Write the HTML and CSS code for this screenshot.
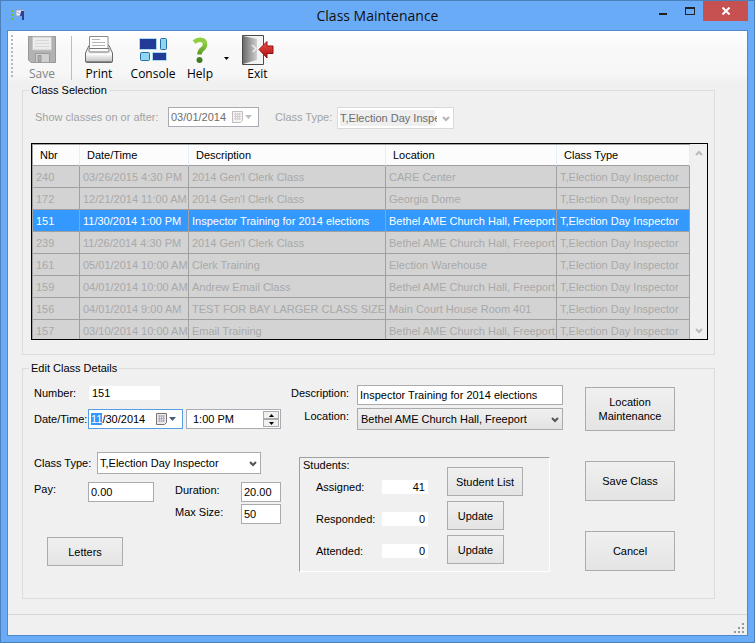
FILE: index.html
```html
<!DOCTYPE html>
<html lang="en">
<head>
    <meta charset="UTF-8">
    <title>Class Maintenance</title>
    <link rel="stylesheet" href="styles.css">
</head>
<body>
    <div class="window">
        <header class="titlebar">
            <svg class="app-icon" width="16" height="12" viewBox="0 0 16 12">
                <path d="M1 1h2v2H1zM1 5h2v2H1zM1 9h2v2H1z" fill="#7cb82f"/>
                <path d="M6 1h8v6H6z" fill="#eef3fb" stroke="#8c9cc4"/>
                <path d="M7 3l3 2" stroke="#9aa6c0"/>
                <path d="M11 2h3v9h-2V7h-2z" fill="#2b3f9c"/>
            </svg>
            <h1>Class Maintenance</h1>
            <div class="window-buttons">
                <button type="button" class="minimize" aria-label="Minimize"><svg width="10" height="10" viewBox="0 0 10 10"><path d="M1 7h8v2H1z" fill="#222"/></svg></button>
                <button type="button" class="maximize" aria-label="Maximize"><svg width="10" height="8" viewBox="0 0 10 8"><path d="M0 0h10v8H0zM1 2v5h8V2z" fill="#222" fill-rule="evenodd"/></svg></button>
                <button type="button" class="close" aria-label="Close"><svg width="8" height="8" viewBox="0 0 8 8"><path d="M0.500 0.500l7 7M7.500 0.500l-7 7" stroke="#fff" stroke-width="2"/></svg></button>
            </div>
        </header>

        <main class="client">
            <nav class="toolbar">
                <span class="grip"></span>
                <button type="button" class="tool save" disabled>
                    <svg width="32" height="32" viewBox="0 0 32 32">
                        <path d="M2.500 2.500h27v26H5l-2.500-2.500z" fill="#b2b2b2" stroke="#989898"/>
                        <path d="M6.500 3h19v13h-19z" fill="#ececec" stroke="#c8c8c8"/>
                        <path d="M9 6.500h14M9 9.500h14M9 12.500h14" stroke="#d8d8d8"/>
                        <path d="M9.500 19.500h14v9h-14z" fill="#d0d0d0" stroke="#9c9c9c"/>
                        <path d="M12 21.500h3v6h-3z" fill="#acacac" stroke="#999"/>
                    </svg>
                    <span>Save</span>
                </button>
                <span class="separator"></span>
                <button type="button" class="tool print">
                    <svg width="32" height="32" viewBox="0 0 32 32">
                        <defs>
                            <linearGradient id="printer" x1="0" y1="0" x2="0" y2="1">
                                <stop offset="0" stop-color="#fff"/>
                                <stop offset="0.6" stop-color="#eee"/>
                                <stop offset="1" stop-color="#bbb"/>
                            </linearGradient>
                        </defs>
                        <path d="M6 11.500h20l3.500 7.500v8q0 1.500-1.500 1.500H4q-1.500 0-1.500-1.500v-8z" fill="url(#printer)" stroke="#6a6a6a"/>
                        <path d="M6.500 2.500h18.500v12H6.500z" fill="#fff" stroke="#8a8a8a"/>
                        <path d="M9 5.500h8M9 8.500h13M9 11.500h13" stroke="#b5b5b5"/>
                        <path d="M6 14.500h20v2.500q0 1-1 1H7q-1 0-1-1z" fill="#fafafa" stroke="#777"/>
                        <path d="M3 20.500h26" stroke="#fff"/>
                        <path d="M3 27.500h26" stroke="#8a8a8a"/>
                    </svg>
                    <span>Print</span>
                </button>
                <button type="button" class="tool console">
                    <svg width="32" height="32" viewBox="0 0 32 32">
                        <rect x="2.500" y="4.500" width="17" height="11" rx="1" fill="#233a97" stroke="#a5dcf2"/>
                        <rect x="23.500" y="4.500" width="6" height="11" rx="1" fill="#8fd8f4" stroke="#2b6ea5"/>
                        <rect x="3.500" y="18.500" width="9" height="8" rx="1" fill="#8fd8f4" stroke="#2b6ea5"/>
                        <rect x="15.500" y="18.500" width="14" height="8" rx="1" fill="#233a97" stroke="#a5dcf2"/>
                    </svg>
                    <span>Console</span>
                </button>
                <button type="button" class="tool help">
                    <svg width="32" height="32" viewBox="0 0 32 32">
                        <defs>
                            <linearGradient id="leaf" gradientUnits="userSpaceOnUse" x1="0" y1="4" x2="0" y2="29">
                                <stop offset="0.2" stop-color="#8fce3c"/>
                                <stop offset="0.9" stop-color="#3f7a1c"/>
                            </linearGradient>
                        </defs>
                        <path d="M10 8q3-2.200 6-2.200 5 0 5 4.400 0 3-3 5.200-2.500 1.800-2.500 5.100" fill="none" stroke="url(#leaf)" stroke-width="4.500"/>
                        <circle cx="15.500" cy="26" r="3" fill="url(#leaf)"/>
                    </svg>
                    <span>Help</span>
                </button>
                <button type="button" class="tool-arrow" aria-label="More help"><svg width="5" height="3" viewBox="0 0 5 3"><path d="M0 0h5L2.500 3z" fill="#000"/></svg></button>
                <button type="button" class="tool exit">
                    <svg width="32" height="32" viewBox="0 0 32 32">
                        <defs>
                            <linearGradient id="door" x1="0" y1="0" x2="1" y2="0">
                                <stop offset="0" stop-color="#6b6b6b"/>
                                <stop offset="1" stop-color="#cfcfcf"/>
                            </linearGradient>
                            <linearGradient id="arrow" x1="0" y1="0" x2="0" y2="1">
                                <stop offset="0" stop-color="#f0504c"/>
                                <stop offset="1" stop-color="#a80d0d"/>
                            </linearGradient>
                        </defs>
                        <path d="M0.500 1.500h21v29h-21z" fill="#f2f2f2" stroke="#4a4a4a"/>
                        <path d="M1 2l14 3v21L1 30z" fill="url(#door)"/>
                        <path d="M10 11l4 3.500-3 3.500" fill="none" stroke="#eee" stroke-width="1.500"/>
                        <path d="M17 15.500l8-8v4.500h6v7.500h-6V24z" fill="url(#arrow)" stroke="#9a1010"/>
                    </svg>
                    <span>Exit</span>
                </button>
            </nav>

            <fieldset class="group">
                <legend>Class Selection</legend>
                <div class="filters">
                    <label class="filter-date-label" for="since">Show classes on or after:</label>
                    <div class="picker filter-date">
                        <input type="text" id="since" value="03/01/2014" disabled>
                        <svg class="calendar" width="23" height="14" viewBox="0 0 23 14">
                            <path d="M1.500 1.500h10v9l-2 2h-8z" fill="#f4f2f2" stroke="#c3bcbc"/>
                            <path d="M3 4h7M3 6.500h7M3 9h7M4.500 3v7M6.500 3v7M8.500 3v7" stroke="#d2cfd2"/>
                            <path d="M14 5h7l-3.500 4z" fill="#bdbdbd"/>
                        </svg>
                    </div>
                    <label class="filter-type-label" for="typeFilter">Class Type:</label>
                    <div class="combo filter-type">
                        <select id="typeFilter" disabled>
                            <option>T,Election Day Inspector</option>
                        </select>
                        <svg class="chevron" width="8" height="6" viewBox="0 0 8 6"><path d="M1 1l3 3 3-3" fill="none" stroke="#b5b5b5" stroke-width="2"/></svg>
                    </div>
                </div>

                <div class="grid">
                    <div class="grid-view">
                        <table>
                            <colgroup>
                                <col class="col-nbr">
                                <col class="col-date">
                                <col class="col-desc">
                                <col class="col-loc">
                                <col>
                            </colgroup>
                            <thead>
                                <tr><th>Nbr</th><th>Date/Time</th><th>Description</th><th>Location</th><th>Class Type</th></tr>
                            </thead>
                            <tbody>
                                <tr><td>240</td><td>03/26/2015 4:30 PM</td><td>2014 Gen'l Clerk Class</td><td>CARE Center</td><td>T,Election Day Inspector</td></tr>
                                <tr><td>172</td><td>12/21/2014 11:00 AM</td><td>2014 Gen'l Clerk Class</td><td>Georgia Dome</td><td>T,Election Day Inspector</td></tr>
                                <tr class="selected"><td>151</td><td>11/30/2014 1:00 PM</td><td>Inspector Training for 2014 elections</td><td>Bethel AME Church Hall, Freeport</td><td>T,Election Day Inspector</td></tr>
                                <tr><td>239</td><td>11/26/2014 4:30 PM</td><td>2014 Gen'l Clerk Class</td><td>Bethel AME Church Hall, Freeport</td><td>T,Election Day Inspector</td></tr>
                                <tr><td>161</td><td>05/01/2014 10:00 AM</td><td>Clerk Training</td><td>Election Warehouse</td><td>T,Election Day Inspector</td></tr>
                                <tr><td>159</td><td>04/01/2014 10:00 AM</td><td>Andrew Email Class</td><td>Bethel AME Church Hall, Freeport</td><td>T,Election Day Inspector</td></tr>
                                <tr><td>156</td><td>04/01/2014 9:00 AM</td><td>TEST FOR BAY LARGER CLASS SIZE</td><td>Main Court House Room 401</td><td>T,Election Day Inspector</td></tr>
                                <tr><td>157</td><td>03/10/2014 10:00 AM</td><td>Email Training</td><td>Bethel AME Church Hall, Freeport</td><td>T,Election Day Inspector</td></tr>
                            </tbody>
                        </table>
                    </div>
                    <div class="scrollbar">
                        <button type="button" aria-label="Scroll up" disabled><svg width="8" height="6" viewBox="0 0 8 6"><path d="M1 5l3-3 3 3" fill="none" stroke="#bbb" stroke-width="2"/></svg></button>
                        <button type="button" aria-label="Scroll down" disabled><svg width="8" height="6" viewBox="0 0 8 6"><path d="M1 1l3 3 3-3" fill="none" stroke="#bbb" stroke-width="2"/></svg></button>
                    </div>
                </div>
            </fieldset>

            <fieldset class="group">
                <legend>Edit Class Details</legend>
                <form class="details">
                    <div class="when">
                        <div class="row number-row">
                            <label for="number">Number:</label>
                            <input class="plain" type="text" id="number" value="151" readonly>
                        </div>
                        <div class="row date-row">
                            <label for="date">Date/Time:</label>
                            <div class="picker active">
                                <input type="text" id="date" value="11/30/2014">
                                <svg class="calendar" width="23" height="14" viewBox="0 0 23 14">
                                    <path d="M1.500 1.500h10v9l-2 2h-8z" fill="#eceaea" stroke="#7d7070"/>
                                    <path d="M3 4h7M3 6.500h7M3 9h7M4.500 3v7M6.500 3v7M8.500 3v7" stroke="#a9b0bd"/>
                                    <path d="M14 5h7l-3.500 4z" fill="#44607f"/>
                                </svg>
                            </div>
                            <div class="picker time">
                                <input type="text" id="time" value="1:00 PM" aria-label="Time">
                                <div class="spinner">
                                    <button type="button" aria-label="Later"><svg width="5" height="3" viewBox="0 0 5 3"><path d="M0 3h5L2.500 0z"/></svg></button>
                                    <button type="button" aria-label="Earlier"><svg width="5" height="3" viewBox="0 0 5 3"><path d="M0 0h5L2.500 3z"/></svg></button>
                                </div>
                            </div>
                        </div>
                        <div class="row type-row">
                            <label for="classType">Class Type:</label>
                            <div class="combo">
                                <select id="classType">
                                    <option>T,Election Day Inspector</option>
                                </select>
                                <svg class="chevron" width="8" height="6" viewBox="0 0 8 6"><path d="M1 1l3 3 3-3" fill="none" stroke="#555" stroke-width="2"/></svg>
                            </div>
                        </div>
                        <div class="amounts">
                            <label for="pay">Pay:</label>
                            <input type="text" id="pay" value="0.00">
                            <label class="second" for="duration">Duration:</label>
                            <input type="text" id="duration" value="20.00">
                            <label class="second" for="maxSize">Max Size:</label>
                            <input type="text" id="maxSize" value="50">
                        </div>
                        <button type="button" class="button letters">Letters</button>
                    </div>

                    <div class="what">
                        <div class="row">
                            <label for="description">Description:</label>
                            <input type="text" id="description" value="Inspector Training for 2014 elections">
                        </div>
                        <div class="row">
                            <label for="location">Location:</label>
                            <div class="combo shaded">
                                <select id="location">
                                    <option>Bethel AME Church Hall, Freeport</option>
                                </select>
                                <svg class="chevron" width="8" height="6" viewBox="0 0 8 6"><path d="M1 1l3 3 3-3" fill="none" stroke="#555" stroke-width="2"/></svg>
                            </div>
                        </div>
                        <section class="students">
                            <div class="counts">
                                <h2>Students:</h2>
                                <div class="count">
                                    <label for="assigned">Assigned:</label>
                                    <input class="plain" type="text" id="assigned" value="41" readonly>
                                </div>
                                <div class="count">
                                    <label for="responded">Responded:</label>
                                    <input class="plain" type="text" id="responded" value="0" readonly>
                                </div>
                                <div class="count">
                                    <label for="attended">Attended:</label>
                                    <input class="plain" type="text" id="attended" value="0" readonly>
                                </div>
                            </div>
                            <div class="updates">
                                <button type="button" class="button student-list">Student List</button>
                                <button type="button" class="button update">Update</button>
                                <button type="button" class="button update">Update</button>
                            </div>
                        </section>
                    </div>

                    <div class="actions">
                        <button type="button" class="button tall">Location Maintenance</button>
                        <button type="button" class="button">Save Class</button>
                        <button type="button" class="button">Cancel</button>
                    </div>
                </form>
            </fieldset>

            <footer class="statusbar">
                <svg width="11" height="11" viewBox="0 0 11 11"><path d="M8 0h2v2H8zM4 4h2v2H4zM8 4h2v2H8zM0 8h2v2H0zM4 8h2v2H4zM8 8h2v2H8z" fill="#9a9a9a"/></svg>
            </footer>
        </main>
    </div>
    <script>
        // start on the month part of the date
        const dateInput = document.getElementById("date");
        dateInput.focus();
        dateInput.setSelectionRange(0, 2);
    </script>
</body>
</html>
```
FILE: styles.css
```css
* {
    box-sizing: border-box;
}
body {
    margin: 0;
    font-family: "Liberation Sans", Arial, sans-serif;
    font-size: 11px;
    line-height: 13px;
    color: #000;
}
input, select, button {
    font: inherit;
    color: inherit;
}
h1, h2 {
    margin: 0;
    font-weight: normal;
}
svg {
    display: block;
}
.window {
    display: flex;
    flex-direction: column;
    min-height: 100vh;
    padding: 0 6px 6px;
    background: #6aabf7;
    border: 1px solid #4c80bb;
}

/* title bar */
.titlebar {
    display: grid;
    grid-template-columns: 1fr auto 1fr;
    height: 29px;
}
.app-icon {
    margin: 8px 0 0 3px;
}
.titlebar h1 {
    font-family: "Open Sans", "Segoe UI", sans-serif;
    font-size: 14px;
    line-height: 29px;
    color: #111;
}
.window-buttons {
    display: flex;
    justify-content: flex-end;
    height: 20px;
}
.window-buttons button {
    display: flex;
    align-items: center;
    justify-content: center;
    width: 27px;
    padding: 0;
    background: none;
    border: none;
}
.window-buttons .close {
    width: 45px;
    background: #c75050;
}

/* toolbar */
.client {
    display: flex;
    flex: 1;
    flex-direction: column;
    background: #f0f0f0;
    border: 1px solid #4f89cb;
}
.toolbar {
    display: flex;
    height: 52px;
    padding: 3px 0 0 3px;
    margin-bottom: 1px;
    background: linear-gradient(#fff, #f9f9f9 30%, #f6f6f6 85%, #f0f0f0);
    font-family: "Open Sans", "Segoe UI", sans-serif;
    font-size: 12px;
    line-height: 16px;
}
.grip {
    width: 2px;
    height: 42px;
    margin: 1px 7px 0 0;
    background: repeating-linear-gradient(#b8b8b8 0 2px, transparent 2px 4px);
}
.tool {
    display: flex;
    flex-direction: column;
    align-items: center;
    padding: 0;
    background: none;
    border: none;
}
.tool:disabled {
    color: #838383;
}
.save {
    width: 44px;
}
.separator {
    width: 1px;
    height: 44px;
    margin: 2px 3px 0 7px;
    background: #bdbdbd;
}
.print {
    width: 48px;
}
.console {
    width: 60px;
}
.help {
    width: 34px;
}
.exit {
    width: 43px;
}
.tool-arrow {
    display: flex;
    justify-content: center;
    width: 19px;
    padding: 23px 0 0;
    background: none;
    border: none;
}

/* group boxes */
.group {
    min-width: 0;
    margin: 0 32px 7px 14px;
    padding: 0;
    border: 1px solid #dcdcdc;
}
.group legend {
    margin-left: 6px;
    padding: 0 2px;
}
.filters {
    display: flex;
    padding: 10px 12px 0;
    color: #a3a3a3;
}
.filters label {
    line-height: 20px;
}
.filter-date-label {
    width: 133px;
}
.filter-type-label {
    width: 62px;
    margin-left: 16px;
}
.filter-date {
    width: 91px;
}
.filter-type {
    width: 117px;
}

/* inputs */
input {
    min-width: 0;
    height: 20px;
    padding: 0 2px;
    background: #fff;
    border: 1px solid #ababab;
    border-radius: 0;
    outline: none;
}
input::selection {
    background: #3399ff;
    color: #fff;
}
input.plain {
    height: 14px;
    padding: 0 3px;
    border: none;
}
.picker {
    display: flex;
    align-items: center;
    height: 20px;
    background: #fff;
    border: 1px solid #ababb3;
}
.picker input {
    flex: 1;
    width: 0;
    height: 18px;
    border: none;
}
.picker input:disabled {
    background: #fff;
    color: #6d6d6d;
}
.picker.active {
    border-color: #569de5;
}
.calendar {
    margin-right: 4px;
}
.spinner {
    display: flex;
    flex-direction: column;
    width: 16px;
    height: 16px;
    margin-right: 1px;
}
.spinner button {
    display: flex;
    flex: 1;
    align-items: center;
    justify-content: center;
    padding: 0;
    background: #f0f0f0;
    border: 1px solid #ababab;
}
.combo {
    position: relative;
    height: 22px;
}
.combo select {
    width: 100%;
    height: 22px;
    padding: 0 20px 0 2px;
    appearance: none;
    background: #fff;
    border: 1px solid #ababab;
    border-radius: 0;
    outline: none;
}
.combo select:disabled {
    padding-right: 16px;
    border-color: #d9d9d9;
    background: linear-gradient(#efefef, #efefef) 2px 2px / 95px 16px no-repeat #fff;
    color: #6d6d6d;
    opacity: 1;
}
.combo.shaded select {
    padding-left: 3px;
    background: linear-gradient(#f0f0f0, #e3e3e3);
}
.chevron {
    position: absolute;
    top: 9px;
    right: 4px;
    pointer-events: none;
}
.button {
    padding: 0 8px;
    background: linear-gradient(#f0f0f0, #e4e4e4);
    border: 1px solid #acacac;
    border-radius: 0;
    line-height: 14px;
}

/* class list */
.grid {
    display: flex;
    height: 197px;
    margin: 14px 6px 14px 8px;
    border: 1px solid #000;
}
.grid-view {
    flex: 1;
    overflow: hidden;
    border-top: 1px solid #a0a0a0;
    border-left: 1px solid #a0a0a0;
}
.grid table {
    width: 100%;
    table-layout: fixed;
    border-collapse: separate;
    border-spacing: 0;
}
.col-nbr {
    width: 47px;
}
.col-date {
    width: 109px;
}
.col-desc {
    width: 197px;
}
.col-loc {
    width: 171px;
}
.grid th {
    height: 21px;
    padding: 0 7px;
    background: #fcfcfc;
    border-right: 1px solid #e5effa;
    border-bottom: 1px solid #a0a0a0;
    font-weight: normal;
    text-align: left;
}
.grid td {
    height: 22px;
    padding: 2px 0 0 3px;
    background: #d3d3d3;
    border-right: 1px solid #a0a0a0;
    border-bottom: 1px solid #a0a0a0;
    color: #a9a9a9;
    white-space: nowrap;
}
.grid .selected td {
    background: #3399ff;
    color: #fff;
}
.scrollbar {
    display: flex;
    flex-direction: column;
    justify-content: space-between;
    width: 17px;
    background: #f0f0f0;
}
.scrollbar button {
    display: flex;
    align-items: center;
    justify-content: center;
    height: 17px;
    padding: 0;
    background: none;
    border: none;
}

/* class details */
.details {
    display: flex;
    padding: 0 39px 26px 11px;
}
.row {
    display: flex;
}
.when {
    width: 247px;
    margin-right: 10px;
    padding-top: 11px;
}
.when .row {
    align-items: center;
}
.number-row label {
    width: 55px;
}
.number-row input {
    width: 71px;
}
.date-row {
    margin-top: 9px;
}
.date-row label {
    width: 54px;
}
.date-row .picker {
    width: 95px;
}
.date-row .time {
    margin-left: 3px;
}
.time input {
    padding-left: 6px;
}
.type-row {
    margin-top: 23px;
}
.type-row label {
    width: 63px;
}
.type-row .combo {
    width: 164px;
}
.amounts {
    display: grid;
    grid-template-columns: 54px 66px 87px 40px;
    gap: 2px 0;
    margin-top: 8px;
}
.amounts label {
    padding-top: 1px;
}
.amounts .second {
    grid-column: 3;
    padding: 2px 0 0 21px;
}
.letters {
    width: 76px;
    height: 29px;
    margin: 13px 0 0 13px;
}
.what {
    flex: 1;
    padding-top: 10px;
}
.what .row {
    margin-bottom: 3px;
}
.what .row label {
    width: 58px;
    margin-right: 8px;
    padding-top: 2px;
    text-align: right;
}
.what .row input, .what .row .combo {
    flex: 1;
}
.students {
    display: flex;
    height: 115px;
    margin: 27px 13px 0 8px;
    border: 1px solid;
    border-color: #a0a0a0 #fff #fff #a0a0a0;
}
.students h2 {
    margin: 1px 0 8px 3px;
    font-size: 11px;
}
.count {
    display: flex;
    align-items: center;
    height: 14px;
    margin: 0 0 18px 16px;
}
.count label {
    width: 66px;
}
.count input {
    width: 46px;
    text-align: right;
}
.updates {
    display: flex;
    flex-direction: column;
    align-items: flex-start;
    gap: 5px;
    padding: 9px 0 0 19px;
}
.updates .button {
    padding: 0;
}
.student-list {
    width: 76px;
    height: 29px;
}
.update {
    width: 57px;
    height: 29px;
}
.actions {
    display: flex;
    flex-direction: column;
    gap: 30px;
    width: 90px;
    margin-left: 22px;
    padding-top: 12px;
}
.actions .button {
    height: 40px;
}
.actions .tall {
    height: 44px;
}

/* status bar */
.statusbar {
    display: flex;
    align-items: flex-end;
    justify-content: flex-end;
    height: 21px;
    margin-top: auto;
    padding: 0 2px 1px;
    border-top: 1px solid #d7d7d7;
}
```
